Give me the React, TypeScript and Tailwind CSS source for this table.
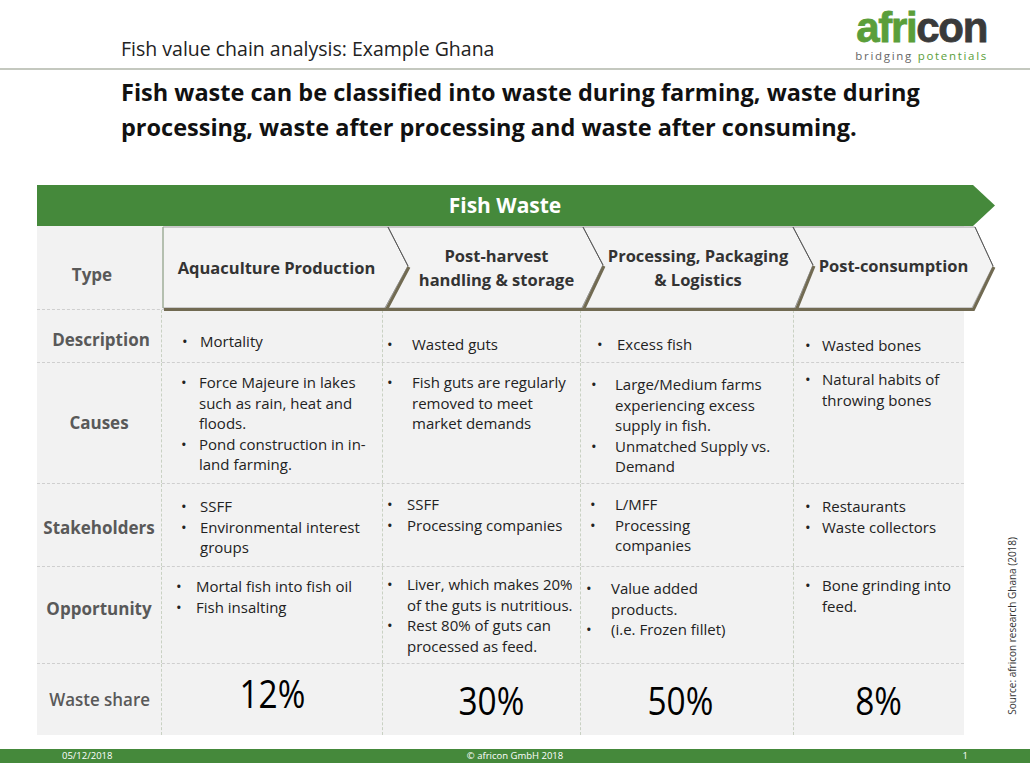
import React from "react";

type Item = string[];

function Bullets({ items, cls, bw }: { items: Item[]; cls: string; bw: string }) {
  return (
    <div className={"border-l border-dashed border-[#c9d1c3] text-[15px] leading-[20.5px] text-[#222] " + cls}>
      {items.map((lines, i) => (
        <div key={i} className="flex">
          <span className={"shrink-0 " + bw}>•</span>
          <div>
            {lines.map((l, j) => (
              <div key={j} className="whitespace-nowrap">
                {l}
              </div>
            ))}
          </div>
        </div>
      ))}
    </div>
  );
}

function Label({ text, cls }: { text: string; cls: string }) {
  return (
    <div className={"flex items-center justify-center text-[17px] font-bold text-[#595959] whitespace-nowrap " + cls}>
      {text}
    </div>
  );
}

const rowGrid = "grid grid-cols-[124px_221px_198px_213px_171px] border-t border-dashed border-[#cfcfcf]";

export default function App() {
  return (
    <div className="w-[1030px] h-[773px] bg-white overflow-hidden text-[#222] font-['Open_Sans',sans-serif]">
      {/* Header */}
      <div className="h-[70px] border-b-2 border-[#c4c8bf] flex justify-between">
        <div className="pl-[121px] pt-[36px] text-[19.5px] leading-[26px] text-[#222] whitespace-nowrap">
          Fish value chain analysis: Example Ghana
        </div>
        <div className="pr-[42px] pt-[9px] flex flex-col items-center">
          <div className="text-[42px] leading-[38px] font-bold tracking-[-1.3px] font-['Liberation_Sans',sans-serif] [-webkit-text-stroke:0.8px]">
            <span className="text-[#5a9e3a]">afri</span>
            <span className="text-[#3a3a3a]">con</span>
          </div>
          <div className="text-[11.5px] leading-[13px] tracking-[1.7px] mt-[2px]">
            <span className="text-[#666]">bridging </span>
            <span className="text-[#5a9e3a]">potentials</span>
          </div>
        </div>
      </div>

      {/* Title */}
      <div className="pl-[121px] pt-[5px] text-[23.5px] leading-[35px] font-bold text-[#111]">
        <div className="whitespace-nowrap">Fish waste can be classified into waste during farming, waste during</div>
        <div className="whitespace-nowrap">processing, waste after processing and waste after consuming.</div>
      </div>

      {/* Body */}
      <div className="flex pl-[37px] mt-[40px]">
        <div className="flex flex-col w-[958px]">
          {/* Banner */}
          <div className="h-[41px] w-[958px] bg-[#45893b] [clip-path:polygon(0_0,936px_0,958px_50%,936px_100%,0_100%)] flex items-center justify-center pr-[22px] text-white text-[21px] font-bold">
            Fish Waste
          </div>

          {/* Table */}
          <div className="w-[927px] bg-[#f2f2f2]">
            {/* Type row */}
            <div className="relative h-[83px] grid grid-cols-[124px_227px_195px_210px_171px]">
              <svg
                className="absolute left-0 top-0 w-[970px] h-[90px] overflow-visible"
                viewBox="37 226 970 90"
              >
                <g fill="#f3f3f3" stroke="#8c8c8c" strokeWidth="0.8">
                  <polygon points="163,227 388,227 408,266 385,308 163,308" />
                  <polygon points="388,227 583,227 603,265 582,308 385,308 408,266" />
                  <polygon points="583,227 793,227 813,265 795,308 582,308 603,265" />
                  <polygon points="793,227 975,227 993,266 972,308 795,308 813,265" />
                </g>
                <line x1="163" y1="227" x2="163" y2="308" stroke="#9fb595" strokeWidth="1" />
                <g fill="none" stroke="#716a52" strokeWidth="3" strokeLinejoin="miter">
                  <polyline points="164,309.5 386.5,309.5 409,267" />
                  <polyline points="386.5,309.5 583.5,309.5 604,266" />
                  <polyline points="583.5,309.5 796.5,309.5 814,266" />
                  <polyline points="796.5,309.5 973.5,309.5 994,267" />
                </g>
                <g fill="none" stroke="#555" strokeWidth="1">
                  <polyline points="388,227 408,266" />
                  <polyline points="583,227 603,265" />
                  <polyline points="793,227 813,265" />
                  <polyline points="975,227 993,266" />
                </g>
              </svg>
              <Label text="Type" cls="relative pt-[15px] pr-[14px]" />
              <div className="relative flex items-center justify-center pl-[4px] text-[16.5px] font-bold text-[#333] leading-[24px] whitespace-nowrap">
                Aquaculture Production
              </div>
              <div className="relative flex flex-col items-center justify-center pl-[22px] text-[16.5px] font-bold text-[#333] leading-[24px] whitespace-nowrap">
                <div>Post-harvest</div>
                <div>handling &amp; storage</div>
              </div>
              <div className="relative flex flex-col items-center justify-center pl-[20px] text-[16.5px] font-bold text-[#333] leading-[24px] whitespace-nowrap">
                <div>Processing, Packaging</div>
                <div>&amp; Logistics</div>
              </div>
              <div className="relative flex items-center justify-center pl-[30px] pb-[3px] text-[16.5px] font-bold text-[#333] leading-[24px] whitespace-nowrap">
                Post-consumption
              </div>
            </div>

            {/* Description */}
            <div className={rowGrid + " h-[53px]"}>
              <Label text="Description" cls="pt-[7px] pl-[4px]" />
              <Bullets items={[["Mortality"]]} cls="pt-[21px] pl-[20px]" bw="w-[18px]" />
              <Bullets items={[["Wasted guts"]]} cls="pt-[24px] pl-[4px]" bw="w-[25px]" />
              <Bullets items={[["Excess fish"]]} cls="pt-[24px] pl-[16px]" bw="w-[20px]" />
              <Bullets items={[["Wasted bones"]]} cls="pt-[25px] pl-[11px]" bw="w-[17px]" />
            </div>

            {/* Causes */}
            <div className={rowGrid + " h-[121px]"}>
              <Label text="Causes" cls="" />
              <Bullets
                items={[
                  ["Force Majeure in lakes", "such as rain, heat and", "floods."],
                  ["Pond construction in in-", "land farming."],
                ]}
                cls="pt-[9px] pl-[19px]"
                bw="w-[18px]"
              />
              <Bullets
                items={[["Fish guts are regularly", "removed to meet", "market demands"]]}
                cls="pt-[9px] pl-[4px]"
                bw="w-[25px]"
              />
              <Bullets
                items={[
                  ["Large/Medium farms", "experiencing excess", "supply in fish."],
                  ["Unmatched Supply vs.", "Demand"],
                ]}
                cls="pt-[11px] pl-[10px]"
                bw="w-[24px]"
              />
              <Bullets items={[["Natural habits of", "throwing bones"]]} cls="pt-[6px] pl-[11px]" bw="w-[17px]" />
            </div>

            {/* Stakeholders */}
            <div className={rowGrid + " h-[83px]"}>
              <Label text="Stakeholders" cls="pt-[5px]" />
              <Bullets
                items={[["SSFF"], ["Environmental interest", "groups"]]}
                cls="pt-[12px] pl-[19px]"
                bw="w-[19px]"
              />
              <Bullets items={[["SSFF"], ["Processing companies"]]} cls="pt-[10px] pl-[4px]" bw="w-[20px]" />
              <Bullets items={[["L/MFF"], ["Processing", "companies"]]} cls="pt-[10px] pl-[9px]" bw="w-[25px]" />
              <Bullets items={[["Restaurants"], ["Waste collectors"]]} cls="pt-[12px] pl-[11px]" bw="w-[17px]" />
            </div>

            {/* Opportunity */}
            <div className={rowGrid + " h-[97px]"}>
              <Label text="Opportunity" cls="pb-[13px]" />
              <Bullets
                items={[["Mortal fish into fish oil"], ["Fish insalting"]]}
                cls="pt-[9px] pl-[14px]"
                bw="w-[20px]"
              />
              <Bullets
                items={[
                  ["Liver, which makes 20%", "of the guts is nutritious."],
                  ["Rest 80% of guts can", "processed as feed."],
                ]}
                cls="pt-[7px] pl-[4px]"
                bw="w-[20px]"
              />
              <Bullets
                items={[["Value added", "products."], ["(i.e. Frozen fillet)"]]}
                cls="pt-[11px] pl-[5px]"
                bw="w-[25px]"
              />
              <Bullets items={[["Bone grinding into", "feed."]]} cls="pt-[8px] pl-[11px]" bw="w-[17px]" />
            </div>

            {/* Waste share */}
            <div className={rowGrid + " h-[72px]"}>
              <div className="flex items-center justify-center pl-[2px]">
                <span className="inline-block text-[18px] font-semibold text-[#595959] scale-x-[0.94] whitespace-nowrap">
                  Waste share
                </span>
              </div>
              <div className="border-l border-dashed border-[#c9d1c3] flex items-center justify-center pb-[13px]">
                <span className="inline-block text-[38px] leading-[44px] text-black scale-x-[0.88]">12%</span>
              </div>
              <div className="border-l border-dashed border-[#c9d1c3] flex items-center justify-center pl-[20px]">
                <span className="inline-block text-[38px] leading-[44px] text-black scale-x-[0.88]">30%</span>
              </div>
              <div className="border-l border-dashed border-[#c9d1c3] flex items-center justify-center pr-[14px]">
                <span className="inline-block text-[38px] leading-[44px] text-black scale-x-[0.88]">50%</span>
              </div>
              <div className="border-l border-dashed border-[#c9d1c3] flex items-center justify-center">
                <span className="inline-block text-[38px] leading-[44px] text-black scale-x-[0.88]">8%</span>
              </div>
            </div>
          </div>
        </div>

        {/* Source */}
        <div className="ml-[8px] self-end mb-[20px] w-[18px] flex justify-center">
          <div className="[writing-mode:vertical-rl] rotate-180 text-[10px] leading-[12px] text-[#333] whitespace-nowrap">
            Source: africon research Ghana (2018)
          </div>
        </div>
      </div>

      {/* Footer */}
      <div className="mt-[14px] h-[14px] bg-[#45893b] flex px-[62px] text-white text-[9.5px] leading-[14px]">
        <div className="w-[100px]">05/12/2018</div>
        <div className="flex-1 text-center">© africon GmbH 2018</div>
        <div className="w-[100px] text-right">1</div>
      </div>
    </div>
  );
}
